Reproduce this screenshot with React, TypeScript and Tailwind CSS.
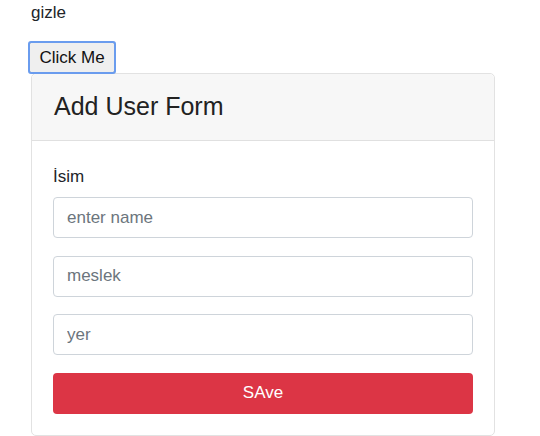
import React from "react";

export default function App() {
  const font = { fontFamily: "'Liberation Sans', Arial, sans-serif" };
  return (
    <div className="w-[540px] h-[436px] bg-white text-[#212529] overflow-hidden" style={font}>
      <div className="pl-[31px] pr-[45px]">
        <div className="pt-[3px] h-[42px] text-[17px] leading-[20px]">gizle</div>
        <button className="ml-[-2px] h-[31px] px-[9.5px] text-[17px] leading-[20px] text-[#111] bg-[#efefef] border border-[#8f8f8f] rounded-[2px] outline-2 outline-[#6a9cee] -outline-offset-1">
          Click Me
        </button>
        <div className="border border-[#e2e2e2] rounded-[5px] bg-white">
          <div className="h-[67px] flex items-center pb-[3px] px-[22px] bg-[#f7f7f7] border-b border-[#e0e0e0] rounded-t-[5px]">
            <h3 className="text-[25px] leading-[28px] font-normal text-[#222]">Add User Form</h3>
          </div>
          <div className="px-[21px] pt-[26px] pb-[21px]">
            <div className="text-[17px] leading-[20px] mb-[10px]">İsim</div>
            <div className="flex flex-col gap-[17.5px]">
              <input
                className="h-[41px] w-full border border-[#ced4da] rounded-[4px] px-[13px] text-[17px] placeholder:text-[#6c757d] outline-none"
                placeholder="enter name"
              />
              <input
                className="h-[41px] w-full border border-[#ced4da] rounded-[4px] px-[13px] text-[17px] placeholder:text-[#6c757d] outline-none"
                placeholder="meslek"
              />
              <input
                className="h-[41px] w-full border border-[#ced4da] rounded-[4px] px-[13px] text-[17px] placeholder:text-[#6c757d] outline-none"
                placeholder="yer"
              />
              <button className="h-[41px] w-full rounded-[4px] bg-[#dc3545] text-white text-[17px]">SAve</button>
            </div>
          </div>
        </div>
      </div>
    </div>
  );
}
